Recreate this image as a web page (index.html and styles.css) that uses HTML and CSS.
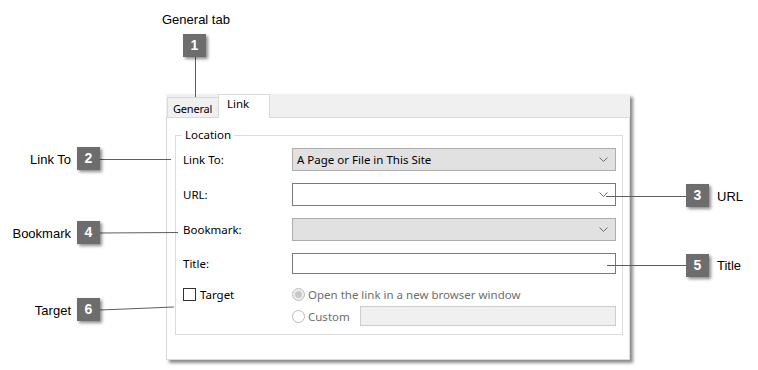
FILE: index.html
```html
<!DOCTYPE html>
<html>
<head>
<meta charset="utf-8">
<link rel="stylesheet" href="styles.css">
</head>
<body>
<div class="page">
  <div class="dialog">
    <div class="tabstrip">
      <div class="tab tab-general">General</div>
      <div class="tab tab-link">Link</div>
    </div>
    <div class="panel">
      <div class="groupbox">
        <span class="legend">Location</span>
        <div class="grid">
          <div class="label">Link To:</div>
          <div class="select disabledsel"><span>A Page or File in This Site</span><svg class="chev" width="9" height="5" viewBox="0 0 9 5"><path d="M0.5 0.5 L4.5 4.5 L8.5 0.5" fill="none" stroke="#6a6a6a" stroke-width="1"/></svg></div>

          <div class="label">URL:</div>
          <div class="select combo"><span></span><svg class="chev" width="9" height="5" viewBox="0 0 9 5"><path d="M0.5 0.5 L4.5 4.5 L8.5 0.5" fill="none" stroke="#6a6a6a" stroke-width="1"/></svg></div>

          <div class="label">Bookmark:</div>
          <div class="select disabledsel"><span></span><svg class="chev" width="9" height="5" viewBox="0 0 9 5"><path d="M0.5 0.5 L4.5 4.5 L8.5 0.5" fill="none" stroke="#6a6a6a" stroke-width="1"/></svg></div>

          <div class="label">Title:</div>
          <div class="textbox"></div>

          <div class="label check-row"><span class="checkbox"></span>Target</div>
          <div class="radios">
            <div class="radio-row"><span class="radio checked"></span><span class="dim">Open the link in a new browser window</span></div>
            <div class="radio-row second"><span class="radio"></span><span class="dim custom-label">Custom</span><div class="custom-input"></div></div>
          </div>
        </div>
      </div>
    </div>
  </div>

  <svg class="leaders" width="758" height="370" viewBox="0 0 758 370">
    <g stroke="#5e5e5e" stroke-width="1" fill="none">
      <line x1="195.5" y1="56" x2="195.5" y2="97"/>
      <line x1="100" y1="159.5" x2="171" y2="159.5"/>
      <line x1="100" y1="233" x2="178" y2="232.5"/>
      <line x1="100" y1="310" x2="174" y2="307"/>
      <line x1="606" y1="196.5" x2="686" y2="196.5"/>
      <line x1="607" y1="265.5" x2="686" y2="265.5"/>
    </g>
  </svg>

  <div class="note note-1">General tab</div>
  <div class="badge b1">1</div>
  <div class="note note-2">Link To</div>
  <div class="badge b2">2</div>
  <div class="note note-4">Bookmark</div>
  <div class="badge b4">4</div>
  <div class="note note-6">Target</div>
  <div class="badge b6">6</div>
  <div class="badge b3">3</div>
  <div class="note note-3">URL</div>
  <div class="badge b5">5</div>
  <div class="note note-5">Title</div>
</div>
</body>
</html>
```

FILE: styles.css
```css
html, body {
  margin: 0;
  padding: 0;
  background: #ffffff;
}

.page {
  position: relative;
  width: 758px;
  height: 370px;
  overflow: hidden;
  font-family: "Noto Sans", "Open Sans", sans-serif;
}

.dialog {
  margin-left: 166px;
  margin-top: 94px;
  width: 464px;
  height: 266px;
  background: #f0f0f0;
  box-shadow: 3px 3px 3px rgba(0, 0, 0, 0.45);
  display: flex;
  flex-direction: column;
  font-size: 11.5px;
  color: #000;
}

.tabstrip {
  height: 23px;
  display: flex;
  align-items: flex-end;
  padding-left: 1px;
  position: relative;
  z-index: 1;
}

.tab {
  box-sizing: border-box;
  border: 1px solid #d9d9d9;
  border-bottom: none;
}

.tab-general {
  width: 52px;
  height: 20px;
  background: #f0f0f0;
  padding: 3px 0 0 5px;
  line-height: 16px;
  font-size: 11px;
  letter-spacing: -0.2px;
}

.tab-link {
  width: 52px;
  height: 24px;
  margin-bottom: -1px;
  margin-left: -1px;
  background: #ffffff;
  padding: 0 0 0 8px;
  line-height: 18px;
}

.panel {
  flex: 1;
  background: #ffffff;
  border: 1px solid #d9d9d9;
  padding: 17px 6px 24px 8px;
  display: flex;
}

.groupbox {
  flex: 1;
  border: 1px solid #dcdcdc;
  padding: 12px 6px 6px 7px;
  position: relative;
}

.legend {
  position: absolute;
  top: -9px;
  left: 6px;
  padding: 0 3px;
  background: #fff;
  line-height: 16px;
}

.grid {
  display: grid;
  grid-template-columns: 109px 1fr;
  grid-template-rows: 23px 23px 23px 21px auto;
  row-gap: 12px;
}

.label {
  display: flex;
  align-items: center;
}

.select {
  box-sizing: border-box;
  display: flex;
  align-items: center;
  justify-content: space-between;
  padding: 0 7px 0 4px;
}

.disabledsel {
  background: #e1e1e1;
  border: 1px solid #adadad;
}

.combo {
  background: #ffffff;
  border: 1px solid #7a7a7a;
}

.chev {
  display: block;
}

.textbox {
  box-sizing: border-box;
  background: #ffffff;
  border: 1px solid #7a7a7a;
}

.check-row {
  align-items: flex-start;
  margin-top: 1px;
}

.checkbox {
  box-sizing: border-box;
  width: 13px;
  height: 13px;
  border: 1px solid #333;
  background: #fff;
  margin-right: 4px;
  margin-top: 1px;
}

.radios {
  display: flex;
  flex-direction: column;
  gap: 4px;
  margin-top: 0;
}

.radio-row {
  display: flex;
  align-items: center;
  height: 16px;
}

.radio-row.second {
  height: 20px;
}

.radio {
  box-sizing: border-box;
  width: 13px;
  height: 13px;
  border-radius: 50%;
  border: 1px solid #bcbcbc;
  background: #fff;
  margin-right: 3px;
  display: flex;
  align-items: center;
  justify-content: center;
}

.radio.checked {
  background: #efefef;
}

.radio.checked::after {
  content: "";
  width: 7px;
  height: 7px;
  border-radius: 50%;
  background: #c8c8c8;
}

.dim {
  color: #6d6d6d;
}

.custom-label {
  width: 52px;
}

.custom-input {
  flex: 1;
  height: 20px;
  box-sizing: border-box;
  background: #f0f0f0;
  border: 1px solid #cccccc;
}

.leaders {
  position: absolute;
  left: 0;
  top: 0;
  pointer-events: none;
}

.badge {
  position: absolute;
  width: 23px;
  height: 23px;
  background: #6d6d6d;
  color: #ffffff;
  font-family: "Liberation Sans", Arial, sans-serif;
  font-weight: bold;
  font-size: 14px;
  line-height: 23px;
  text-align: center;
  box-shadow: 2px 2px 3px rgba(0, 0, 0, 0.45);
}

.b1 { left: 183px; top: 34px; }
.b2 { left: 77px; top: 147px; }
.b4 { left: 77px; top: 221px; }
.b6 { left: 77px; top: 298px; }
.b3 { left: 686px; top: 184px; }
.b5 { left: 686px; top: 254px; }

.note {
  position: absolute;
  font-family: "Liberation Sans", Arial, sans-serif;
  font-size: 13px;
  line-height: 15px;
  color: #000;
  white-space: nowrap;
}

.note-1 { left: 162px; top: 12px; }
.note-2 { right: 687px; top: 152px; }
.note-4 { right: 687px; top: 226px; }
.note-6 { right: 687px; top: 303px; }
.note-3 { left: 717px; top: 189px; }
.note-5 { left: 717px; top: 258px; }
```
